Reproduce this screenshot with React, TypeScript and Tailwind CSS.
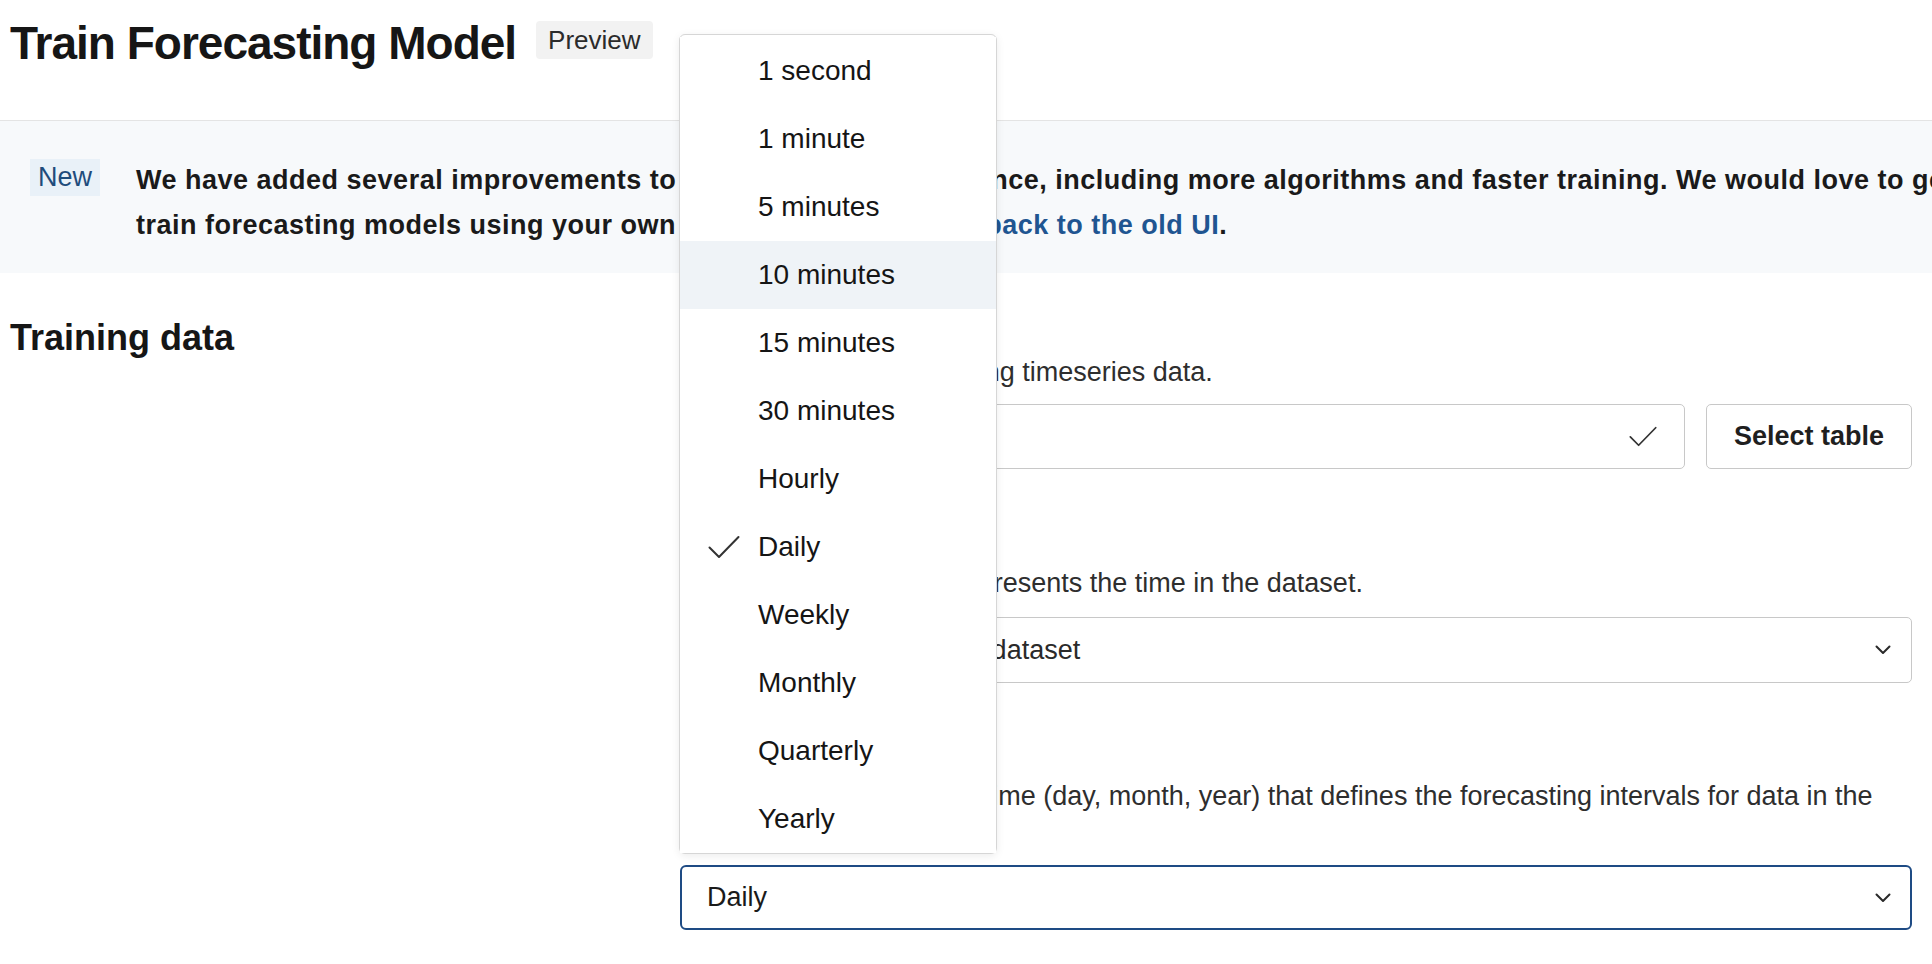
import React from "react";

const intervals = [
  "1 second",
  "1 minute",
  "5 minutes",
  "10 minutes",
  "15 minutes",
  "30 minutes",
  "Hourly",
  "Daily",
  "Weekly",
  "Monthly",
  "Quarterly",
  "Yearly",
];

function Check({ className }: { className?: string }) {
  return (
    <svg viewBox="0 0 32 24" className={className} fill="none">
      <polyline
        points="1.5,12.5 11,22 30.5,2"
        stroke="#333"
        strokeWidth="2"
        strokeLinecap="round"
        strokeLinejoin="round"
      />
    </svg>
  );
}

function Chevron() {
  return (
    <svg viewBox="0 0 16 10" className="w-[16px] h-[10px]" fill="none">
      <polyline
        points="1.5,1.5 8,8 14.5,1.5"
        stroke="#2a2a2a"
        strokeWidth="2"
        strokeLinecap="round"
        strokeLinejoin="round"
      />
    </svg>
  );
}

export default function App() {
  const selected = "Daily";
  const hovered = "10 minutes";

  return (
    <div className="relative w-[1932px] h-[964px] overflow-hidden bg-white font-['Liberation_Sans',Arial,sans-serif] text-[#1a1a1a]">
      {/* page header */}
      <header className="h-[121px] border-b border-[#e4e4e4] flex items-start gap-[20px] pl-[10px] pt-[16px]">
        <h1 className="text-[46px] leading-[54px] font-bold tracking-[-1px] text-[#161616]">
          Train Forecasting Model
        </h1>
        <span className="mt-[5px] h-[38px] px-[12px] flex items-center bg-[#f2f2f2] rounded-[4px] text-[26px] text-[#2b2b2b]">
          Preview
        </span>
      </header>

      {/* announcement banner */}
      <div className="bg-[#f7f9fb] pl-[30px] pt-[37px] pb-[25px] flex items-start">
        <span className="shrink-0 mt-[1px] h-[37px] w-[70px] flex items-center justify-center bg-[#e9f1f8] text-[#1f4c7c] text-[27px]">
          New
        </span>
        <p className="ml-[36px] shrink-0 whitespace-nowrap text-[27px] leading-[45px] font-bold tracking-[0.5px] text-[#1a1a1a]">
          We have added several improvements to the forecasting experience, including more algorithms and faster
          training. We would love to get your feedback as you
          <br />
          train forecasting models using your own data. You may also go{" "}
          <a className="text-[#1f5591]">back to the old UI</a>.
        </p>
      </div>

      {/* training data section */}
      <div className="flex pt-[43px] pl-[10px] pr-[20px]">
        <div className="w-[670px] shrink-0">
          <h2 className="text-[36px] leading-[44px] font-bold text-[#161616]">Training data</h2>
        </div>

        <div className="flex-1 pt-[5px] flex flex-col">
          {/* table */}
          <div className="flex flex-col">
            <div className="text-[27px] leading-[34px] font-bold">Training table</div>
            <div className="text-[27px] leading-[34px] text-[#2e2e2e]">
              Choose the table containing timeseries data.
            </div>
            <div className="mt-[15px] flex gap-[21px]">
              <div className="flex-1 h-[65px] border border-[#c8c8c8] rounded-[5px] flex items-center justify-between pl-[27px] pr-[27px]">
                <span className="text-[27px] text-[#1a1a1a]">main.sales</span>
                <Check className="w-[28px] h-[21px]" />
              </div>
              <button className="w-[206px] h-[65px] border border-[#c8c8c8] rounded-[5px] text-[27px] font-semibold text-[#1f1f1f] bg-white">
                Select table
              </button>
            </div>
          </div>

          {/* time column */}
          <div className="mt-[63px] flex flex-col">
            <div className="text-[27px] leading-[34px] font-bold">Time column</div>
            <div className="text-[27px] leading-[34px] text-[#2e2e2e]">
              Select the column that represents the time in the dataset.
            </div>
            <div className="mt-[17px] h-[66px] border border-[#c8c8c8] rounded-[5px] flex items-center justify-between pl-[27px] pr-[20px]">
              <span className="text-[27px] text-[#2a2a2a]">Select column from the dataset</span>
              <Chevron />
            </div>
          </div>

          {/* frequency */}
          <div className="mt-[62px] flex flex-col">
            <div className="text-[27px] leading-[34px] font-bold">Forecast frequency</div>
            <div className="text-[27px] leading-[34px] text-[#2e2e2e]">
              Select the desired unit of time (day, month, year) that defines the forecasting intervals for data in the
              dataset.
            </div>
            <div className="mt-[18px] h-[65px] border-2 border-[#1e4b84] rounded-[6px] flex items-center justify-between pl-[25px] pr-[19px]">
              <span className="text-[27px] text-[#1a1a1a]">{selected}</span>
              <Chevron />
            </div>
          </div>
        </div>
      </div>

      {/* open frequency menu */}
      <div className="absolute left-[679px] top-[34px] w-[318px] bg-white border border-[#d6d6d6] rounded-[6px] pt-[2px] pb-[0px] shadow-[0_2px_8px_rgba(0,0,0,0.08)]">
        {intervals.map((item) => (
          <div
            key={item}
            className={
              "h-[68px] flex items-center " + (item === hovered ? "bg-[#eff3f7]" : "bg-white")
            }
          >
            <div className="w-[78px] shrink-0 flex pl-[28px]">
              {item === selected ? <Check className="w-[32px] h-[24px]" /> : null}
            </div>
            <span className="text-[28px] text-[#151515]">{item}</span>
          </div>
        ))}
      </div>
    </div>
  );
}
